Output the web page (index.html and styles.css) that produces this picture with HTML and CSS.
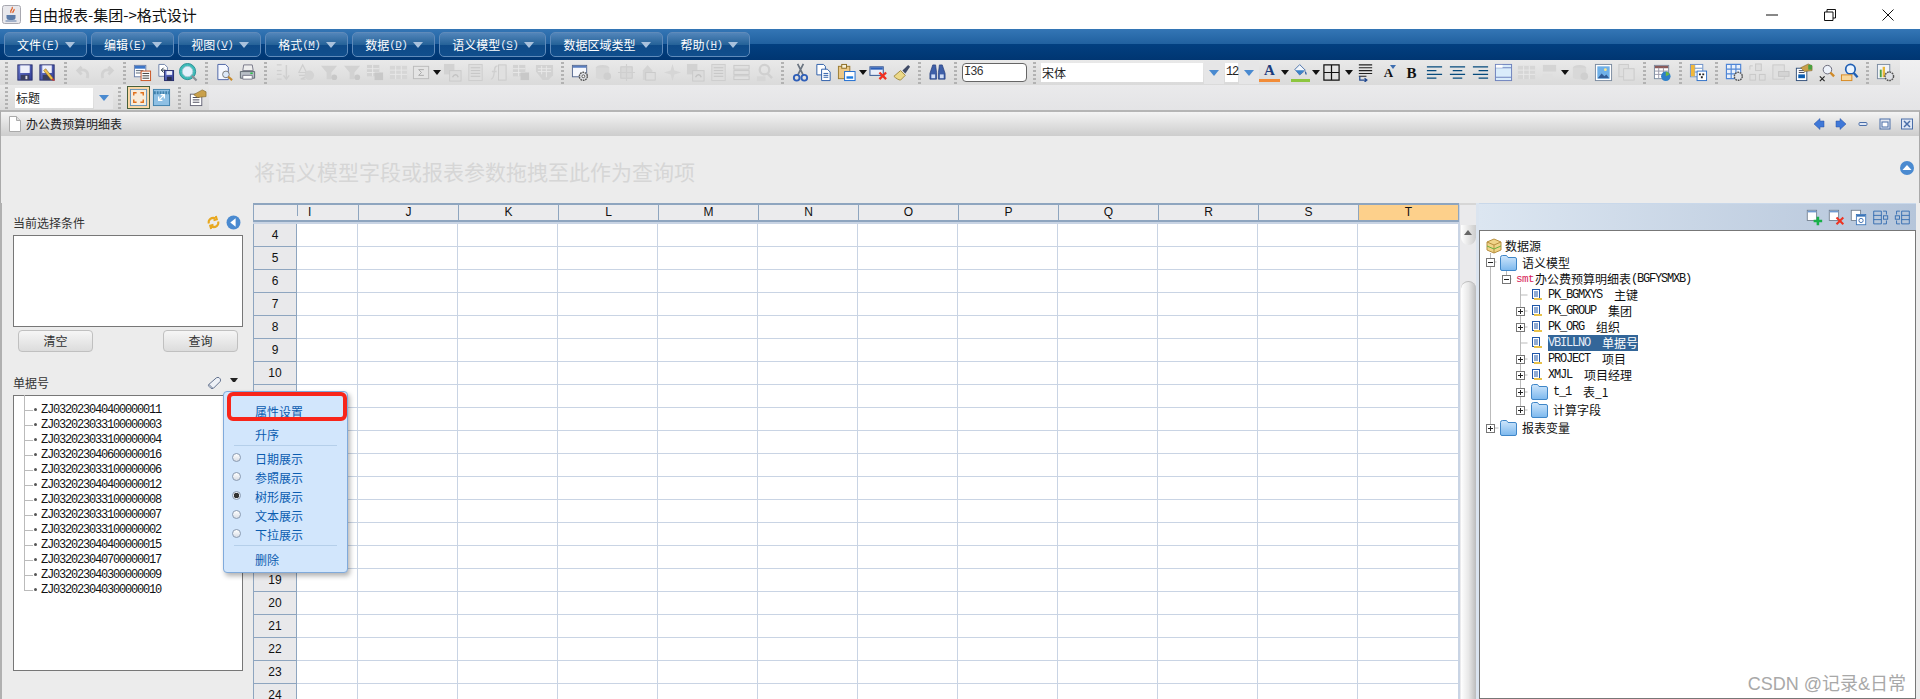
FILE: index.html
```html
<!DOCTYPE html>
<html lang="zh">
<head>
<meta charset="utf-8">
<title>自由报表-集团->格式设计</title>
<link rel="stylesheet" href="styles.css">
</head>
<body>
<svg class="defs" aria-hidden="true">
<defs>
<linearGradient id="fl" x1="0" y1="0" x2="0" y2="1"><stop offset="0" stop-color="#cfe6fb"/><stop offset="1" stop-color="#7cb8ee"/></linearGradient>
<linearGradient id="fp" x1="0" y1="0" x2="1" y2="1"><stop offset="0" stop-color="#6f7fd0"/><stop offset="1" stop-color="#2f3a94"/></linearGradient>
<symbol id="save" viewBox="0 0 20 20"><rect x="3" y="2" width="15" height="16" fill="url(#fp)" stroke="#252c6b"/><rect x="5.5" y="2.5" width="10" height="8" fill="#eef0fa"/><rect x="6" y="12.500" width="9" height="5.500" fill="#3a3f60"/><rect x="11" y="13.500" width="2" height="3.500" fill="#ddd"/></symbol>
<symbol id="saveas" viewBox="0 0 20 20"><rect x="2" y="2" width="15" height="16" fill="url(#fp)" stroke="#252c6b"/><rect x="4.500" y="2.500" width="10" height="8" fill="#eef0fa"/><rect x="5" y="12.500" width="8" height="5.500" fill="#3a3f60"/><path d="M8 6l8 10-2 2L6 8z" fill="#f1c04e" stroke="#7a5a10" stroke-width=".6"/><path d="M14 18l2-2 2 3z" fill="#d0392b"/></symbol>
<symbol id="undo" viewBox="0 0 20 20"><path d="M8 4L4 8l4 4M5 8c6-2 11 0 9 8" fill="none" stroke="#d2d2d2" stroke-width="3"/></symbol>
<symbol id="redo" viewBox="0 0 20 20"><path d="M12 4l4 4-4 4M15 8c-6-2-11 0-9 8" fill="none" stroke="#d2d2d2" stroke-width="3"/></symbol>
<symbol id="tdoc" viewBox="0 0 20 20"><rect x="1.500" y="2.500" width="12" height="12" fill="#fff" stroke="#6a7fa8"/><rect x="2" y="3" width="11" height="3" fill="#3c76c8"/><path d="M3 8h8M3 10.500h8" stroke="#567"/><rect x="8.500" y="8.500" width="10" height="10" fill="#fff" stroke="#c8501e"/><path d="M10 11h7M10 13.500h7M10 16h7" stroke="#333"/></symbol>
<symbol id="dfloppy" viewBox="0 0 20 20"><path d="M3 1.500h6l3 3V14H3z" fill="#fff" stroke="#6a7fa8"/><path d="M8 5L5.500 7.500 8 10M6 7.500h4" fill="none" stroke="#234"/><rect x="9" y="8" width="9.500" height="10.500" fill="url(#fp)" stroke="#252c6b"/><rect x="11" y="8.500" width="6" height="4" fill="#eef0fa"/><rect x="11.500" y="14.500" width="5" height="4" fill="#2a2f50"/></symbol>
<symbol id="globe" viewBox="0 0 20 20"><circle cx="9" cy="9" r="8.500" fill="#3fbcb8" stroke="#2a8f96"/><circle cx="9" cy="9" r="5.500" fill="#e4f1fb" stroke="#a8c8d4"/><path d="M13.500 13.500l5 5" stroke="#8a8f96" stroke-width="2.200"/></symbol>
<symbol id="prev" viewBox="0 0 20 20"><path d="M3 1.500h8l3 3v13H3z" fill="#f5f8ff" stroke="#4a62a4"/><circle cx="11.500" cy="12" r="3.500" fill="#dce8f8" stroke="#777"/><path d="M14 14.500l4 3.500" stroke="#c88a2a" stroke-width="2.200"/></symbol>
<symbol id="print" viewBox="0 0 20 20"><path d="M6 2h9l1 6H5z" fill="#eee" stroke="#778"/><path d="M2.500 9h15v7h-15z" fill="#b8bec6" stroke="#5f6670"/><path d="M5 13h10v4H5z" fill="#fff" stroke="#778"/><rect x="13" y="10" width="2.500" height="1.500" fill="#20c040"/></symbol>
<symbol id="dsort" viewBox="0 0 20 20"><path d="M3 2h5M3 8h5M3 12h5M3 17h5M13 2v14M10 13l3 4 3-4" stroke="#cfcfcf" stroke-width="1.500" fill="none"/></symbol>
<symbol id="dsortg" viewBox="0 0 20 20"><path d="M6 2L2 10h8zM2 13h7v1.500l-5 2.500h5" stroke="#cfcfcf" stroke-width="1.300" fill="none"/><circle cx="13" cy="13" r="5" fill="#d4d4d4"/></symbol>
<symbol id="dfun" viewBox="0 0 20 20"><path d="M1 3h17l-6 7v7H7v-7z" fill="#d2d2d2"/><circle cx="15" cy="15" r="3" fill="#c8c8c8"/></symbol>
<symbol id="dtabs" viewBox="0 0 20 20"><rect x="1" y="2" width="13" height="12" fill="#d2d2d2"/><path d="M1 6h13M1 10h13M7 2v12" stroke="#e8e8e8"/><rect x="9" y="10" width="9" height="8" fill="#c8c8c8"/></symbol>
<symbol id="dgrid" viewBox="0 0 20 20"><rect x="1" y="3" width="18" height="14" fill="#d6d6d6"/><path d="M1 7.500h18M1 12h18M7 3v14M13 3v14" stroke="#e8e8e8"/></symbol>
<symbol id="dsum" viewBox="0 0 20 20"><rect x="1.500" y="3.500" width="16" height="13" fill="#e4e4e4" stroke="#bbb"/><path d="M12.500 7H7l3 3-3 3h5.500" fill="none" stroke="#aaa"/></symbol>
<symbol id="dback" viewBox="0 0 20 20"><rect x="1" y="1" width="11" height="11" fill="#d2d2d2"/><rect x="7" y="8" width="12" height="11" fill="#dcdcdc" stroke="#cacaca"/><path d="M10 15c2-4 5-3 6 0" stroke="#c4c4c4" stroke-width="1.500" fill="none"/></symbol>
<symbol id="dlines" viewBox="0 0 20 20"><rect x="3" y="1.500" width="14" height="17" fill="#dedede" stroke="#cdcdcd"/><path d="M5 5h10M5 8h10M5 11h10M5 14h10" stroke="#c4c4c4"/></symbol>
<symbol id="dfx" viewBox="0 0 20 20"><path d="M9 3C6 3 6 6 5.500 10S4 17 2 17M3 9h5" stroke="#d0d0d0" stroke-width="1.500" fill="none"/><rect x="10" y="2" width="8" height="16" fill="#e0e0e0" stroke="#cacaca"/></symbol>
<symbol id="dkey" viewBox="0 0 20 20"><path d="M1 2h18v11l-5 5H8L1 9z" fill="#d2d2d2"/><path d="M3 6h14M3 9h14M7 3v9M12 3v12" stroke="#e8e8e8"/></symbol>
<symbol id="gear" viewBox="0 0 20 20"><rect x="1.500" y="2.500" width="15" height="12" fill="#f6f8fd" stroke="#56698f"/><rect x="2" y="3" width="14" height="2" fill="#5a7ec0"/><circle cx="13" cy="14" r="4.200" fill="#dfe1e5" stroke="#555" stroke-width="1.500" stroke-dasharray="1.800 .8"/><circle cx="13" cy="14" r="1.500" fill="#fff" stroke="#555"/></symbol>
<symbol id="ddb" viewBox="0 0 20 20"><ellipse cx="9" cy="5" rx="7" ry="3" fill="#d4d4d4"/><path d="M2 5v10c0 3 14 3 14 0V5z" fill="#d8d8d8"/><circle cx="14" cy="14" r="4" fill="#cfcfcf"/></symbol>
<symbol id="dcross" viewBox="0 0 20 20"><rect x="4" y="4" width="12" height="12" fill="#d8d8d8" stroke="#cacaca"/><path d="M10 1v18M1 10h18" stroke="#cfcfcf" stroke-width="1.200"/></symbol>
<symbol id="dhouse" viewBox="0 0 20 20"><path d="M3 8l5-6 5 6v10H3z" fill="#d4d4d4"/><rect x="6" y="10" width="10" height="8" fill="#dedede" stroke="#cacaca"/></symbol>
<symbol id="dstar" viewBox="0 0 20 20"><path d="M10 1l2 7 7 2-7 2-2 7-2-7-7-2 7-2z" fill="#d6d6d6"/></symbol>
<symbol id="dstack" viewBox="0 0 20 20"><rect x="2" y="2.500" width="16" height="4" fill="#e0e0e0" stroke="#c8c8c8"/><rect x="2" y="8" width="16" height="4" fill="#e0e0e0" stroke="#c8c8c8"/><rect x="2" y="13.500" width="16" height="4" fill="#e0e0e0" stroke="#c8c8c8"/></symbol>
<symbol id="dsearch" viewBox="0 0 20 20"><circle cx="10" cy="7" r="5" fill="none" stroke="#d0d0d0" stroke-width="2.500"/><path d="M13 11l5 5" stroke="#d0d0d0" stroke-width="2.500"/><rect x="2" y="14" width="9" height="5" fill="#d6d6d6"/></symbol>
<symbol id="cut" viewBox="0 0 20 20"><path d="M7 1l6 12M13 1L7 13" stroke="#6a7480" stroke-width="1.800"/><circle cx="6" cy="15.500" r="3" fill="none" stroke="#2f5fb8" stroke-width="2"/><circle cx="14" cy="15.500" r="3" fill="none" stroke="#2f5fb8" stroke-width="2"/></symbol>
<symbol id="copy" viewBox="0 0 20 20"><path d="M3 1.500h7l2 2v9H3z" fill="#fff" stroke="#2a5ca8"/><path d="M8 6.500h6l3 3v9H8z" fill="#fff" stroke="#2a5ca8"/><path d="M10 11h5M10 13h5M10 15h5" stroke="#2a5ca8"/></symbol>
<symbol id="paste" viewBox="0 0 20 20"><rect x="1.500" y="3.500" width="12" height="13" fill="#ecc886" stroke="#9a7a30"/><rect x="5" y="1.500" width="5" height="4" fill="#f6f0d8" stroke="#8a6a20"/><rect x="8" y="9" width="11" height="9.500" fill="#fff" stroke="#1a6ad0"/><rect x="10" y="14" width="7" height="2.500" fill="#1a7ae0"/></symbol>
<symbol id="delx" viewBox="0 0 20 20"><rect x="1" y="4" width="14" height="9" fill="#e9eef8" stroke="#2b4f90"/><rect x="1.500" y="4.500" width="13" height="2.500" fill="#2b5fb8"/><path d="M11 10l7 7M18 10l-7 7" stroke="#f03020" stroke-width="2.400"/></symbol>
<symbol id="brush" viewBox="0 0 20 20"><path d="M2 14l7-6 5 5-5 5C7 18 4 16 2 14z" fill="#ecd988" stroke="#a08a40"/><path d="M11 8l6-6 2 2-5 7z" fill="#3f4a66"/></symbol>
<symbol id="binoc" viewBox="0 0 20 20"><path d="M5 2h3l1 8v7H2v-6zM12 2h3l3 9v6h-7v-7z" fill="#3e5fa8" stroke="#1f3a78" stroke-width=".7"/><rect x="3.500" y="12" width="4" height="4" fill="#cfdcf5"/><rect x="12.500" y="12" width="4" height="4" fill="#cfdcf5"/></symbol>
<symbol id="paint" viewBox="0 0 20 20"><path d="M3 8l6-6 7 7-7 6z" fill="#f2f6fb" stroke="#2d5ca0"/><path d="M4 9h11l-6 6z" fill="#3a82c8"/><path d="M16 10c2 2 2 4 1 5-1-1-2-3-1-5z" fill="#2d5ca0"/></symbol>
<symbol id="border" viewBox="0 0 20 20"><path d="M2 2h16v16H2zM10 2v16M2 10h16" fill="none" stroke="#111" stroke-width="1.300"/></symbol>
<symbol id="wrap" viewBox="0 0 20 20"><path d="M3 2h14M3 5h14M3 8h14M3 11h14M3 14h8" stroke="#222" stroke-width="1.200"/><path d="M4 14v4h7M9 16l2.500 2L9 20" stroke="#234a90" stroke-width="1.300" fill="none"/></symbol>
<symbol id="al" viewBox="0 0 20 20"><path d="M2 4h16M2 8h10M2 12h16M2 16h10" stroke="#054a7c" stroke-width="1.400"/></symbol>
<symbol id="ac" viewBox="0 0 20 20"><path d="M2 4h16M5 8h10M2 12h16M5 16h10" stroke="#054a7c" stroke-width="1.400"/></symbol>
<symbol id="ar" viewBox="0 0 20 20"><path d="M2 4h16M8 8h10M2 12h16M8 16h10" stroke="#054a7c" stroke-width="1.400"/></symbol>
<symbol id="strip" viewBox="0 0 20 20"><rect x="1.500" y="1.500" width="17" height="17" fill="#d9ecfb" stroke="#6c80bc"/><path d="M2 5h16M2 15h16" stroke="#6c80bc"/><rect x="2" y="2" width="7" height="3" fill="#fff"/></symbol>
<symbol id="dsplit" viewBox="0 0 20 20"><rect x="3" y="2" width="14" height="7" fill="#d4d4d4"/><rect x="3" y="11" width="10" height="7" fill="#dedede"/></symbol>
<symbol id="image" viewBox="0 0 20 20"><rect x="1.500" y="1.500" width="17" height="17" fill="#fff" stroke="#7a8ba0"/><rect x="3.500" y="3.500" width="13" height="13" fill="#6fb0e8"/><path d="M4 16l4-5 3 3 2-2 3 4z" fill="#315c96"/><circle cx="12" cy="7" r="1.500" fill="#fbe68a"/></symbol>
<symbol id="dimage" viewBox="0 0 20 20"><rect x="2" y="1.500" width="10" height="13" fill="#dedede" stroke="#cacaca"/><rect x="7" y="6" width="11" height="12" fill="#e0e0e0" stroke="#cacaca"/></symbol>
<symbol id="pie" viewBox="0 0 20 20"><rect x="1.500" y="2.500" width="15" height="14" fill="#fff" stroke="#7a8ba0"/><rect x="2" y="3" width="14" height="2.500" fill="#8a5a5a"/><path d="M2 8.500h14M2 12h14M6 5v11M11 5v11" stroke="#99a"/><circle cx="13.500" cy="14" r="5" fill="#2d7fc8"/><path d="M13.500 14V9a5 5 0 0 1 4 3z" fill="#68b840"/></symbol>
<symbol id="qr" viewBox="0 0 20 20"><rect x="1.500" y="1.500" width="13" height="13" fill="#fff" stroke="#6c90c8"/><path d="M2 5.500h12M2 9.500h12M6 2v12" stroke="#6c90c8"/><rect x="2" y="2" width="4" height="12" fill="#f3b83a"/><rect x="8.500" y="8.500" width="10" height="10" fill="#fff" stroke="#2f70c8"/><path d="M10.500 11h2v2h-2zM14 11h2v2h-2zM12.500 14h2v2h-2z" fill="#222"/></symbol>
<symbol id="gridg" viewBox="0 0 20 20"><path d="M1.500 1.500h15v15h-15zM1.500 6.500h15M1.500 11.500h15M6.500 1.500v15M11.500 1.500v15" fill="#eaf1fb" stroke="#4f86d6" stroke-width="1.200"/><circle cx="14" cy="14" r="4.200" fill="#dfe1e5" stroke="#555" stroke-width="1.500" stroke-dasharray="1.800 .8"/></symbol>
<symbol id="dmove" viewBox="0 0 20 20"><path d="M2 7V3h3" fill="none" stroke="#c8c8c8"/><rect x="8" y="1" width="6" height="7" fill="#dedede" stroke="#c8c8c8"/><rect x="2" y="12" width="6" height="6" fill="#dedede" stroke="#c8c8c8"/><rect x="12" y="12" width="6" height="6" fill="#dedede" stroke="#c8c8c8"/></symbol>
<symbol id="dform" viewBox="0 0 20 20"><rect x="2" y="2" width="12" height="15" fill="#e0e0e0" stroke="#cacaca"/><rect x="8" y="9" width="11" height="5" fill="#d4d4d4" stroke="#c4c4c4"/></symbol>
<symbol id="hand" viewBox="0 0 20 20"><rect x="2.500" y="5.500" width="11" height="13" fill="#fff" stroke="#33507a"/><rect x="4.500" y="12" width="7" height="4" fill="#0b5cb0"/><path d="M5 8h6M5 10h6" stroke="#445"/><path d="M7 5l8-4 4 2v5l-8 1z" fill="#c9a04a" stroke="#7a6020" stroke-width=".6"/><rect x="15" y="2" width="4" height="5" fill="#4aa040"/></symbol>
<symbol id="fxs" viewBox="0 0 20 20"><circle cx="11" cy="7" r="4.500" fill="#eef3fb" stroke="#667"/><path d="M14 10l4 4" stroke="#d08a28" stroke-width="2.500"/><path d="M3 14l5 5M8 14l-5 5" stroke="#222" stroke-width="1.200"/></symbol>
<symbol id="findo" viewBox="0 0 20 20"><circle cx="11" cy="6.500" r="5" fill="#eaf4ff" stroke="#1f5fb4" stroke-width="1.800"/><path d="M14.500 10.500l4 4.500" stroke="#1f5fb4" stroke-width="2.500"/><rect x="1.500" y="12.500" width="11" height="6" fill="#f7d79c" stroke="#d88820"/></symbol>
<symbol id="setb" viewBox="0 0 20 20"><rect x="1.500" y="1.500" width="13" height="15" fill="#f2f4f8" stroke="#7a8ba0"/><rect x="4" y="7" width="2" height="8" fill="#4aa040"/><rect x="7" y="4" width="2.500" height="11" fill="#e8b83a"/><circle cx="14" cy="14" r="4.500" fill="#dfe1e5" stroke="#555" stroke-width="1.500" stroke-dasharray="1.800 .8"/></symbol>
<symbol id="frame" viewBox="0 0 20 20"><rect x="1.500" y="1.500" width="17" height="17" fill="#f7ecdb" stroke="#5f8fb8"/><path d="M5 8V5h3M12 5h3v3M15 12v3h-3M8 15H5v-3" fill="none" stroke="#e0701c" stroke-width="1.500"/></symbol>
<symbol id="film" viewBox="0 0 20 20"><rect x="1.500" y="1.500" width="17" height="17" fill="#8fc0e4" stroke="#3f80ac"/><path d="M2 5h16" stroke="#3f80ac" stroke-dasharray="2 1" stroke-width="3"/><path d="M7 13l6-6M9 7h4v4M7 9v4h4" fill="none" stroke="#fff" stroke-width="1.300"/></symbol>
<symbol id="attr" viewBox="0 0 20 20"><rect x="2.500" y="6.500" width="12" height="12" fill="#fff" stroke="#667"/><path d="M5 10h7M5 12.500h7M5 15h7" stroke="#445"/><path d="M6 7l9-5 4 2v5l-9 1z" fill="#c9a04a" stroke="#7a6020" stroke-width=".6"/></symbol>
<symbol id="addd" viewBox="0 0 20 20"><rect x="1.500" y="1.500" width="11" height="12" fill="#fff" stroke="#6f7c8c"/><rect x="2" y="2" width="10" height="2" fill="#6f9ad0"/><path d="M14 9v10M9 14h10" stroke="#18b048" stroke-width="3"/></symbol>
<symbol id="deld" viewBox="0 0 20 20"><rect x="1.500" y="1.500" width="11" height="12" fill="#fff" stroke="#6f7c8c"/><rect x="2" y="2" width="10" height="2" fill="#6f9ad0"/><path d="M10 10l8 8M18 10l-8 8" stroke="#ee3322" stroke-width="2.400"/></symbol>
<symbol id="refd" viewBox="0 0 20 20"><rect x="1.500" y="1.500" width="11" height="12" fill="#fff" stroke="#6f7c8c"/><rect x="7.500" y="6.500" width="11" height="12" fill="#fff" stroke="#3a74b8"/><rect x="8" y="7" width="10" height="2" fill="#3a74b8"/><circle cx="13" cy="13.500" r="2.500" fill="none" stroke="#2a60a8"/></symbol>
<symbol id="expd" viewBox="0 0 20 20"><path d="M2 2.500h9v15H2zM2 7.500h9M2 12.500h9" fill="none" stroke="#2a66ad"/><path d="M13 2.500h4v4M17 13.500v4h-4" fill="none" stroke="#2a66ad"/><rect x="13.500" y="8" width="5" height="4" fill="none" stroke="#2a66ad"/></symbol>
<symbol id="coll" viewBox="0 0 20 20"><path d="M9 2.500h9v15H9zM9 7.500h9M9 12.500h9" fill="none" stroke="#2a66ad"/><path d="M7 2.500H3v4M3 13.500v4h4" fill="none" stroke="#2a66ad"/><rect x="1.500" y="8" width="5" height="4" fill="none" stroke="#2a66ad"/></symbol>
<symbol id="field" viewBox="0 0 12 12"><rect x="1.500" y=".5" width="7" height="9" fill="#fff" stroke="#1f56a8"/><path d="M3 3h4M3 5h4M3 7h4" stroke="#1f56a8"/><rect x="3" y="9" width="8" height="2" fill="#e8c14a"/></symbol>
<symbol id="folder" viewBox="0 0 17 16"><path d="M.5 2.500q0-2 2-2h4l1.500 2h7q1.500 0 1.500 1.500v10q0 1.500-1.500 1.500h-13q-1.500 0-1.500-1.500z" fill="url(#fl)" stroke="#3f86c8"/></symbol>
</defs>
</svg>

<header class="titlebar">
  <svg class="appicon" viewBox="0 0 19 19"><rect x=".5" y=".5" width="18" height="18" rx="2" fill="#e8e8ec" stroke="#a8a8b0"/><path d="M10 2c2 2-3 3-1 6M12 4c1 2-2 2-1 4" fill="none" stroke="#e05a20" stroke-width="1.200"/><path d="M4.500 10h9v2.500q0 2.500-3 2.500h-3q-3 0-3-2.500z" fill="#5a7ba8"/><path d="M3.500 16h11" stroke="#5a7ba8"/></svg>
  <span class="apptitle">自由报表-集团-&gt;格式设计</span>
  <div class="winctl">
    <svg class="wb" viewBox="0 0 12 12"><path d="M0 6h12" stroke="#111"/></svg>
    <svg class="wb" viewBox="0 0 12 12"><path d="M.5 3h8.500v8.500H.5zM3 3V.5h8.500V9H9" fill="none" stroke="#111"/></svg>
    <svg class="wb" viewBox="0 0 12 12"><path d="M.5.500l11 11M11.500.500l-11 11" stroke="#111"/></svg>
  </div>
</header>

<nav class="menubar">
  <div class="mbtn">文件<span class="mk">(<u>F</u>)</span><i class="tri"></i></div>
  <div class="mbtn">编辑<span class="mk">(<u>E</u>)</span><i class="tri"></i></div>
  <div class="mbtn">视图<span class="mk">(<u>V</u>)</span><i class="tri"></i></div>
  <div class="mbtn">格式<span class="mk">(<u>M</u>)</span><i class="tri"></i></div>
  <div class="mbtn">数据<span class="mk">(<u>D</u>)</span><i class="tri"></i></div>
  <div class="mbtn">语义模型<span class="mk">(<u>S</u>)</span><i class="tri"></i></div>
  <div class="mbtn">数据区域类型<i class="tri"></i></div>
  <div class="mbtn">帮助<span class="mk">(<u>H</u>)</span><i class="tri"></i></div>
</nav>

<section class="tools">
  <div class="tb tb1">
    <b class="grip"></b>
    <svg class="i"><use href="#save"/></svg><svg class="i"><use href="#saveas"/></svg>
    <b class="grip"></b>
    <svg class="i"><use href="#undo"/></svg><svg class="i"><use href="#redo"/></svg>
    <b class="grip"></b>
    <svg class="i"><use href="#tdoc"/></svg><svg class="i"><use href="#dfloppy"/></svg><svg class="i"><use href="#globe"/></svg>
    <b class="grip"></b>
    <svg class="i"><use href="#prev"/></svg><svg class="i"><use href="#print"/></svg>
    <b class="grip"></b>
    <svg class="i"><use href="#dsort"/></svg><svg class="i"><use href="#dsortg"/></svg><svg class="i"><use href="#dfun"/></svg><svg class="i"><use href="#dfun"/></svg><svg class="i"><use href="#dtabs"/></svg><svg class="i"><use href="#dgrid"/></svg><svg class="i"><use href="#dsum"/></svg>
    <i class="dd"></i>
    <svg class="i"><use href="#dback"/></svg><svg class="i"><use href="#dlines"/></svg><svg class="i"><use href="#dfx"/></svg><svg class="i"><use href="#dtabs"/></svg><svg class="i"><use href="#dkey"/></svg>
    <b class="grip"></b>
    <svg class="i"><use href="#gear"/></svg><svg class="i"><use href="#ddb"/></svg><svg class="i"><use href="#dcross"/></svg><svg class="i"><use href="#dhouse"/></svg><svg class="i"><use href="#dstar"/></svg><svg class="i"><use href="#dback"/></svg><svg class="i"><use href="#dlines"/></svg><svg class="i"><use href="#dstack"/></svg><svg class="i"><use href="#dsearch"/></svg>
    <b class="grip"></b>
    <svg class="i"><use href="#cut"/></svg><svg class="i"><use href="#copy"/></svg><svg class="i"><use href="#paste"/></svg>
    <i class="dd ml1"></i>
    <svg class="i"><use href="#delx"/></svg><svg class="i"><use href="#brush"/></svg>
    <b class="grip"></b>
    <svg class="i"><use href="#binoc"/></svg>
    <b class="grip"></b>
    <div class="cellref">I36</div>
    <b class="grip"></b>
    <div class="combo fontname">宋体</div><i class="cbtn"></i>
    <div class="combo fontsize">12</div><i class="cbtn"></i>
    <span class="fcolor">A</span><i class="dd"></i>
    <svg class="i paintbar"><use href="#paint"/></svg><i class="dd"></i>
    <svg class="i"><use href="#border"/></svg><i class="dd ml2"></i>
    <svg class="i ml1"><use href="#wrap"/></svg>
    <span class="tchar small">A</span><span class="tchar">B</span>
    <svg class="i"><use href="#al"/></svg><svg class="i"><use href="#ac"/></svg><svg class="i"><use href="#ar"/></svg><svg class="i"><use href="#strip"/></svg><svg class="i"><use href="#dgrid"/></svg><svg class="i"><use href="#dsplit"/></svg>
    <i class="dd"></i>
    <svg class="i"><use href="#ddb"/></svg><svg class="i"><use href="#image"/></svg><svg class="i"><use href="#dimage"/></svg>
    <b class="grip"></b>
    <svg class="i"><use href="#pie"/></svg>
    <b class="grip"></b>
    <svg class="i"><use href="#qr"/></svg>
    <b class="grip"></b>
    <svg class="i"><use href="#gridg"/></svg><svg class="i"><use href="#dmove"/></svg><svg class="i"><use href="#dform"/></svg><svg class="i"><use href="#hand"/></svg><svg class="i"><use href="#fxs"/></svg><svg class="i"><use href="#findo"/></svg>
    <b class="grip"></b>
    <svg class="i"><use href="#setb"/></svg>
  </div>
  <div class="tb tb2">
    <b class="grip"></b>
    <div class="combo stylebox">标题</div><i class="cbtn"></i>
    <b class="grip"></b>
    <span class="active"><svg class="i"><use href="#frame"/></svg></span><svg class="i"><use href="#film"/></svg>
    <b class="grip"></b>
    <svg class="i"><use href="#attr"/></svg>
  </div>
</section>

<section class="tabbar">
  <svg class="docicon" viewBox="0 0 12 16"><path d="M.5.500h7l4 4v11H.5z" fill="#fff" stroke="#aaa"/><path d="M7.500.500v4h4" fill="#ddd" stroke="#aaa"/></svg>
  <span class="tabname">办公费预算明细表</span>
  <div class="tabctl">
    <svg class="tc" viewBox="0 0 12 12"><path d="M1 6l6-5.500V3h4v6H7v2.500z" fill="#3f78d8" stroke="#2a52a0" stroke-width=".5"/></svg>
    <svg class="tc" viewBox="0 0 12 12"><path d="M11 6L5 .5V3H1v6h4v2.500z" fill="#3f78d8" stroke="#2a52a0" stroke-width=".5"/></svg>
    <svg class="tc" viewBox="0 0 12 12"><rect x="2" y="4.500" width="8" height="3" rx="1" fill="#dfe7f5" stroke="#4a6ea8"/></svg>
    <svg class="tc" viewBox="0 0 12 12"><rect x="1" y="1" width="10" height="10" fill="#e4e8f0" stroke="#4a6ea8"/><rect x="3" y="4" width="6" height="5" fill="#fff" stroke="#4a6ea8"/></svg>
    <svg class="tc" viewBox="0 0 12 12"><rect x=".5" y="1" width="11" height="10" fill="#dfe7f5" stroke="#4a6ea8"/><path d="M3 3l6 6M9 3L3 9" stroke="#4a6ea8" stroke-width="1.500"/></svg>
  </div>
</section>

<section class="query">
  <span class="hint">将语义模型字段或报表参数拖拽至此作为查询项</span>
  <svg class="upbtn" viewBox="0 0 14 14"><circle cx="7" cy="7" r="7" fill="#4a8ad0"/><path d="M2.500 9L7 4l4.500 5z" fill="#fff"/></svg>
</section>

<main class="work">
  <aside class="left">
    <div class="lhead">
      <span class="ltext">当前选择条件</span>
      <svg class="lic" viewBox="0 0 16 16"><path d="M3 9c-1-4 3-7 7-5.500M10.500 1l1 3.500-3.500 1M13 7c1 4-3 7-7 5.500M5.500 15l-1-3.500 3.500-1" fill="none" stroke="#e8a820" stroke-width="2.200"/></svg>
      <svg class="lic" viewBox="0 0 14 14"><circle cx="7" cy="7" r="6.500" fill="#4a8ad0"/><path d="M9 3v8L4 7z" fill="#fff"/></svg>
    </div>
    <div class="condbox"></div>
    <div class="lbtns"><span class="btn">清空</span><span class="btn">查询</span></div>
    <div class="lhead second">
      <span class="ltext">单据号</span>
      <svg class="lic" viewBox="0 0 16 16"><path d="M2 10l8-7q2-1 3 0l1 1q1 1 0 3l-7 7q-2 1-3 0L2 12q-1-1 0-2z" fill="#eef1f6" stroke="#5a6a88"/><path d="M2 10l4 4" stroke="#5a6a88"/></svg>
      <i class="minidd"></i>
    </div>
    <ul class="bills">
      <li><s></s><span class="code">ZJ032023040400000011</span></li>
      <li><s></s><span class="code">ZJ032023033100000003</span></li>
      <li><s></s><span class="code">ZJ032023033100000004</span></li>
      <li><s></s><span class="code">ZJ032023040600000016</span></li>
      <li><s></s><span class="code">ZJ032023033100000006</span></li>
      <li><s></s><span class="code">ZJ032023040400000012</span></li>
      <li><s></s><span class="code">ZJ032023033100000008</span></li>
      <li><s></s><span class="code">ZJ032023033100000007</span></li>
      <li><s></s><span class="code">ZJ032023033100000002</span></li>
      <li><s></s><span class="code">ZJ032023040400000015</span></li>
      <li><s></s><span class="code">ZJ032023040700000017</span></li>
      <li><s></s><span class="code">ZJ032023040300000009</span></li>
      <li><s></s><span class="code">ZJ032023040300000010</span></li>
    </ul>
  </aside>

  <section class="sheet">
    <div class="colhead">
      <span class="corner"></span><span class="col first">I</span><span class="col">J</span><span class="col">K</span><span class="col">L</span><span class="col">M</span><span class="col">N</span><span class="col">O</span><span class="col">P</span><span class="col">Q</span><span class="col">R</span><span class="col">S</span><span class="col cur">T</span>
    </div>
    <div class="sheetbody">
      <div class="rows">
        <span>4</span><span>5</span><span>6</span><span>7</span><span>8</span><span>9</span><span>10</span><span></span><span></span><span></span><span></span><span></span><span></span><span></span><span></span><span>19</span><span>20</span><span>21</span><span>22</span><span>23</span><span>24</span>
      </div>
      <div class="cells"></div>
    </div>
  </section>

  <div class="vbar"><span class="vup"></span><span class="vthumb"></span></div>

  <aside class="right">
    <div class="rhead">
      <svg class="i"><use href="#addd"/></svg><svg class="i"><use href="#deld"/></svg><svg class="i"><use href="#refd"/></svg><svg class="i"><use href="#expd"/></svg><svg class="i"><use href="#coll"/></svg>
    </div>
    <div class="rtree">
      <svg class="tlines" width="170" height="210"><path d="M10.500 22v175M26.500 40v8M40.500 56v123M10.500 31h6M26.500 48h5M40.500 64h7M40.500 80h7M40.500 96h7M40.500 112h7M40.500 128h7M40.500 144h7M40.500 161h7M40.500 179h7M10.500 197h8" fill="none" stroke="#bbb"/></svg>
      <div class="node n0 h17"><svg class="cube" viewBox="0 0 16 16"><path d="M8 1l7 3v8l-7 3-7-3V4z" fill="#f0d488" stroke="#b89040"/><path d="M1 4l7 3 7-3M8 7v8" fill="none" stroke="#b89040"/><path d="M1 8l7 3 7-3" stroke="#6ab040" fill="none"/></svg>数据源</div>
      <div class="node n0 h17"><i class="exp minus"></i><svg class="fold"><use href="#folder"/></svg><span class="nt">语义模型</span></div>
      <div class="node n1"><i class="exp minus"></i><span class="smt">smt</span><span>办公费预算明细表</span><span class="code">(BGFYSMXB)</span></div>
      <div class="node n2"><i class="exp none"></i><svg class="fld"><use href="#field"/></svg><span class="code">PK_BGMXYS  </span><span>主键</span></div>
      <div class="node n2"><i class="exp plus"></i><svg class="fld"><use href="#field"/></svg><span class="code">PK_GROUP  </span><span>集团</span></div>
      <div class="node n2"><i class="exp plus"></i><svg class="fld"><use href="#field"/></svg><span class="code">PK_ORG  </span><span>组织</span></div>
      <div class="node n2"><i class="exp none"></i><svg class="fld"><use href="#field"/></svg><span class="sel"><span class="code">VBILLNO  </span><span>单据号</span></span></div>
      <div class="node n2"><i class="exp plus"></i><svg class="fld"><use href="#field"/></svg><span class="code">PROJECT  </span><span>项目</span></div>
      <div class="node n2"><i class="exp plus"></i><svg class="fld"><use href="#field"/></svg><span class="code">XMJL  </span><span>项目经理</span></div>
      <div class="node n2 h18"><i class="exp plus"></i><svg class="fold f2"><use href="#folder"/></svg><span class="code">t_1  </span><span>表_1</span></div>
      <div class="node n2 h18"><i class="exp plus"></i><svg class="fold f2"><use href="#folder"/></svg><span>计算字段</span></div>
      <div class="node n0 h18"><i class="exp plus"></i><svg class="fold"><use href="#folder"/></svg><span class="nt">报表变量</span></div>
    </div>
  </aside>
</main>

<div class="popup">
  <div class="pi first">属性设置</div>
  <div class="pi">升序</div>
  <hr class="psep">
  <div class="pi radio"><i class="rd"></i>日期展示</div>
  <div class="pi radio"><i class="rd"></i>参照展示</div>
  <div class="pi radio"><i class="rd on"></i>树形展示</div>
  <div class="pi radio"><i class="rd"></i>文本展示</div>
  <div class="pi radio"><i class="rd"></i>下拉展示</div>
  <hr class="psep last">
  <div class="pi">删除</div>
  <span class="mark"></span>
</div>

<div class="watermark">CSDN @记录&amp;日常</div>
</body>
</html>
```

FILE: styles.css
```css
*{box-sizing:border-box}
html,body{margin:0;height:699px;overflow:hidden}
body{position:relative;display:flex;flex-direction:column;background:#ececec;font:12px/16px "Noto Sans CJK SC","Liberation Sans",sans-serif;color:#222}
.defs{position:absolute;width:0;height:0}
i,b,s{display:block;font-style:normal}
.code{font:12px/16px "Liberation Mono",monospace;letter-spacing:-1.2px;white-space:pre;color:#111}

.titlebar{height:29px;flex:none;background:#fff;display:flex;align-items:center;padding-left:2px}
.appicon{width:19px;height:19px;margin-right:7px}
.apptitle{font-size:15px;color:#111;line-height:20px}
.winctl{margin-left:auto;margin-right:26px;display:flex;gap:46px;align-items:center}
.wb{width:12px;height:12px}

.menubar{height:31px;flex:none;display:flex;gap:4px;padding:3px 4px 3px;background:linear-gradient(#3476b6 0,#20609f 50%,#023f80 50%,#003672 100%)}
.mbtn{display:flex;align-items:center;padding:0 11px 0 12px;height:25px;border:1px solid #5f8bbb;border-radius:5px;color:#fff;background:linear-gradient(#5285ba 0,#266399 50%,#0e4a88 52%,#114f8d 100%)}
.mk{font:11px/16px "Liberation Mono",monospace;letter-spacing:-.6px;color:#e8eef8}
.tri{width:0;height:0;margin-left:6px;border-left:5px solid transparent;border-right:5px solid transparent;border-top:6px solid #a9c2dd}

.tools{height:50px;flex:none;background:linear-gradient(#f0f0f1,#e4e4e6)}
.tb{height:25px;display:flex;align-items:center;background:linear-gradient(#e9e9e9,#dadada)}
.tb1{width:1900px}
.tb2{width:209px}
.grip{width:3px;height:22px;margin:0 5px;flex:none;background:repeating-linear-gradient(#b2b2b2 0 2px,transparent 2px 4px)}
.i{width:19px;height:19px;margin:0 2px;flex:none}
.dd{width:8px;height:8px;flex:none;border-left:4px solid transparent;border-right:4px solid transparent;border-top:5px solid #111;margin-top:3px}
.ml1{margin-left:1px}
.ml2{margin-left:2px}
.i.ml1{margin-left:3px}
.cellref{width:65px;height:19px;margin-left:0;margin-right:1px;border:1px solid #666;border-radius:4px;background:#fff;font:12px/17px "Liberation Mono",monospace;letter-spacing:-1px;color:#333;padding-left:1px;flex:none}
.combo{height:19px;background:#fff;line-height:19px;flex:none;padding-left:1px;color:#222}
.fontname{width:162px}
.fontsize{width:13px;font:12px/19px "Liberation Mono",monospace;letter-spacing:-1.2px;margin-left:1px}
.stylebox{width:78px;height:20px;margin-left:2px;line-height:20px}
.cbtn{width:20px;height:23px;flex:none;position:relative;background:#e6e6e7;display:flex;align-items:center;justify-content:center;margin-left:1px}
.cbtn::after{content:"";border-left:5px solid transparent;border-right:5px solid transparent;border-top:6px solid #4a8ad0}
.tb2 .cbtn{width:19px}
.fcolor{width:21px;height:21px;flex:none;text-align:center;font:bold 15px/16px "Liberation Serif",serif;color:#1c3d7c;box-shadow:inset 0 -4px 0 -1px #f28c38;border-bottom:1px solid transparent;margin:0 1px 0 0}
.paintbar{border-bottom:3px solid #8dc63f}
.tchar{width:23px;flex:none;text-align:center;font:bold 15px/18px "Liberation Serif",serif;color:#111}
.tchar.small{font-size:13px;position:relative}
.tchar.small::after{content:"";position:absolute;right:4px;top:1px;border-left:3px solid transparent;border-right:3px solid transparent;border-top:4px solid #3c6db0}
.active{width:23px;height:23px;flex:none;margin-left:1px;display:flex;align-items:center;justify-content:center;background:#fdd9a5;border:1px solid #46603c}
.active .i{margin:0}

.tabbar{height:26px;flex:none;display:flex;align-items:center;padding-left:8px;border-top:2px solid #b5b5b5;border-left:1px solid #aaa;border-right:1px solid #aaa;background:linear-gradient(#f4f4f4,#cdcdcd)}
.docicon{width:12px;height:16px;margin-right:5px}
.tabname{color:#222}
.tabctl{margin-left:auto;display:flex;gap:10px;margin-right:6px}
.tc{width:12px;height:12px}

.query{height:67px;flex:none;display:flex;align-items:center;padding:3px 5px 0 253px;border-left:1px solid #aaa;border-right:1px solid #aaa}
.hint{font-size:21px;line-height:28px;color:#d6d6d6}
.upbtn{width:14px;height:14px;margin-left:auto;margin-bottom:6px}

.work{flex:1;display:flex;min-height:0}
.left{width:253px;flex:none;padding:12px 0 0 11px;border-left:2px solid #b0b0b0;position:relative}
.lhead{height:20px;width:230px;display:flex;align-items:flex-start;gap:5px}
.lhead .ltext{margin-right:auto;line-height:16px;color:#333}
.lic{width:15px;height:15px;flex:none}
.lhead .lic:last-child{margin-right:2px}
.lhead.second{margin-top:23px}
.minidd{width:8px;height:8px;margin:3px 5px 0 3px;border-left:3px solid transparent;border-right:3px solid transparent;border-top:4px solid #222}
.condbox{width:230px;height:92px;background:#fff;border:1px solid #777}
.lbtns{display:flex;gap:70px;padding:3px 0 0 5px}
.btn{width:75px;height:22px;border:1px solid #c0c0c0;border-radius:4px;text-align:center;line-height:20px;background:linear-gradient(#f6f6f6,#dcdcdc);color:#333;font-size:12px}
.bills{list-style:none;margin:0;padding:6px 0 0;width:230px;height:276px;background:#fff;border:1px solid #777}
.bills li{height:15px;display:flex;align-items:center;padding-left:20px;position:relative}
.bills li::before{content:"";position:absolute;left:10px;top:-7px;width:8px;height:15px;border-left:1px solid #bbb;border-bottom:1px solid #bbb}
.bills s{width:3px;height:3px;border-radius:50%;background:#555;margin-right:4px;flex:none}

.sheet{width:1206px;flex:none;overflow:hidden;background:#fff;border-top:2px solid #8ea5bf}
.colhead{height:17px;display:flex;border-left:1px solid #8ea5bf;background:#ebebed;border-bottom:2px solid #8ea5bf;font-family:"Liberation Sans",sans-serif}
.corner{width:43px;flex:none}
.col{width:100px;flex:none;text-align:center;border-left:1px solid #8ea5bf;line-height:15px;color:#111}
.col.first{width:61px;text-align:left;padding-left:10px}
.col.cur{background:#fdd08b;border-right:1px solid #8ea5bf;width:101px}
.sheetbody{display:flex;border-top:2px solid #c9d4e4}
.rows{width:44px;flex:none;display:flex;flex-direction:column;font-family:"Liberation Sans",sans-serif;background:#e9e9eb;border-left:1px solid #8ea5bf;border-right:1px solid #8ea5bf}
.rows span{height:23px;flex:none;text-align:center;line-height:23px;border-bottom:1px solid #8ea5bf;color:#111}
.cells{flex:1;height:483px;background:
  repeating-linear-gradient(transparent 0 22px,#c9d4e4 22px 23px),
  repeating-linear-gradient(90deg,transparent 0 60px,#c9d4e4 60px 61px,transparent 61px 160px,#c9d4e4 160px 161px,transparent 161px 260px,#c9d4e4 260px 261px,transparent 261px 360px,#c9d4e4 360px 361px,transparent 361px 460px,#c9d4e4 460px 461px,transparent 461px 560px,#c9d4e4 560px 561px,transparent 561px 660px,#c9d4e4 660px 661px,transparent 661px 760px,#c9d4e4 760px 761px,transparent 761px 860px,#c9d4e4 860px 861px,transparent 861px 960px,#c9d4e4 960px 961px,transparent 961px 1060px,#c9d4e4 1060px 1061px,transparent 1061px 1161px,#c9d4e4 1161px 1162px)}

.vbar{width:17px;flex:none;padding:20px 1px 0;background:#eaeaec;display:flex;flex-direction:column;align-items:center;border-top:2px solid #d6d6d6;border-left:1px solid #c9d4e4}
.vup{width:15px;height:20px;background:linear-gradient(90deg,#fff,#ccc);position:relative;border-radius:0 0 8px 8px;flex:none}
.vup::after{content:"";position:absolute;left:3px;top:5px;border-left:4px solid transparent;border-right:4px solid transparent;border-bottom:5px solid #666}
.vthumb{width:15px;flex:1;margin-top:36px;background:linear-gradient(90deg,#fff,#e8e8e8 50%,#bcbcbc);border-radius:8px 8px 0 0;border-top:1px solid #bbb}

.right{flex:1;min-width:0;display:flex;flex-direction:column;border-left:3px solid #dbe4ef;padding-right:4px;position:relative}
.rhead{height:27px;flex:none;display:flex;justify-content:flex-end;align-items:center;padding-right:3px;background:linear-gradient(90deg,#dce6f1,#b5c5da);border-top:1px solid #c9d8ea}
.rhead .i{width:17px;height:17px;margin:0 2.500px}
.rtree{flex:1;background:#fff;border:1px solid #777;padding-top:6px;position:relative;color:#111}
.tlines{position:absolute;left:0;top:0}
.node{height:16px;display:flex;align-items:center;position:relative;line-height:16px;white-space:pre}
.h17{height:17px}
.h18{height:18px}
.n0{padding-left:6px}
.n1{padding-left:22px}
.n2{padding-left:36px}
.cube{width:16px;height:16px;margin-right:3px}
.exp{width:9px;height:9px;flex:none;border:1px solid #777;background:#fff;position:relative}
.exp.none{border:0;background:none}
.exp::before{content:"";position:absolute;left:1px;right:1px;top:3px;height:1px;background:#222}
.exp.plus::after{content:"";position:absolute;top:1px;bottom:1px;left:3px;width:1px;background:#222}
.exp.none::before{display:none}
.fold{width:17px;height:16px;margin:0 5px;flex:none}
.fold.f2{margin:0 5px 0 6px}
.nt{display:block}
.smt{color:#d81c5a;font:11px/16px "Liberation Mono",monospace;margin:0 1px 0 5px;letter-spacing:-.6px}
.fld{width:12px;height:12px;flex:none;margin:0 5px 0 6px}
.sel{display:flex;background:#336699;color:#fff;height:16px}
.sel .code{color:#e8eef8}

.popup{position:absolute;left:223px;top:391px;width:125px;height:182px;padding-top:10px;background:#d2e6fc;border:1px solid #80aadb;border-radius:4px;box-shadow:2px 3px 5px rgba(0,0,0,.3);color:#0a5cb0}
.pi{height:19px;line-height:19px;padding-left:31px;display:flex;align-items:center}
.first{margin-bottom:4px}
.pi.radio{padding-left:8px}
.psep{border:0;height:1px;margin:1px 10px 3px;background:#b5cfea}
.psep.last{margin-bottom:4px}
.rd{width:9px;height:9px;border-radius:50%;border:1px solid #8a9ab0;background:linear-gradient(#fff,#d8dde5);margin:0 14px 3px 0;flex:none}
.rd.on{background:radial-gradient(circle,#333 0 2.500px,#e8ecf2 3px)}
.mark{position:absolute;left:3px;top:0;width:120px;height:29px;border:4px solid #f8251a;border-radius:6px}

.watermark{position:absolute;right:14px;top:673px;font-size:18px;line-height:22px;color:#a8a8a8;font-family:"Liberation Sans","Noto Sans CJK SC",sans-serif}
```
